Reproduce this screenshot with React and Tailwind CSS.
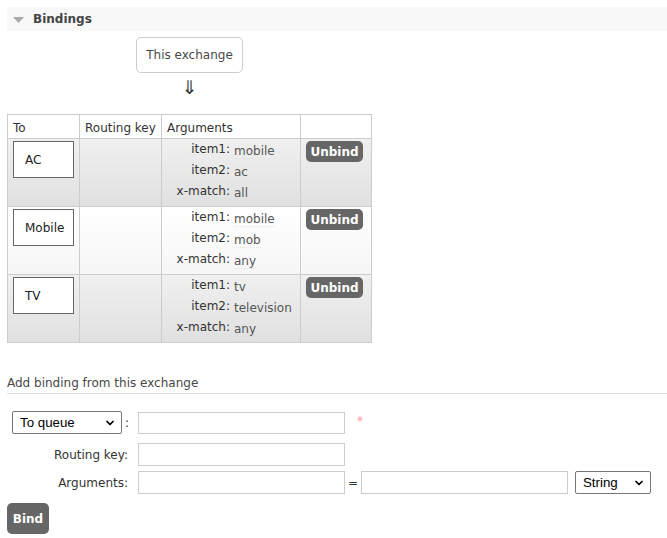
import { ChevronDown } from "lucide-react";

const bindings = [
	{ to: "AC", args: [["item1", "mobile"], ["item2", "ac"], ["x-match", "all"]], alt: false },
	{ to: "Mobile", args: [["item1", "mobile"], ["item2", "mob"], ["x-match", "any"]], alt: true },
	{ to: "TV", args: [["item1", "tv"], ["item2", "television"], ["x-match", "any"]], alt: false },
];

const Select = ({ label, width }) => (
	<div
		className={`relative h-[23px] ${width} border border-[#767676] rounded-[2px] bg-white flex items-center pl-[7px] text-[13.3px] text-black`}
		style={{ fontFamily: '"Liberation Sans", Arial, sans-serif' }}
	>
		{label}
		<ChevronDown size={12} strokeWidth={3.5} className="absolute right-[5px] top-[5px] text-black" />
	</div>
);

const App = () => {
	return (
		<div className="w-[667px] h-[538px] bg-white text-[12px] text-[#484848] overflow-hidden" style={{ fontFamily: '"DejaVu Sans", Verdana, sans-serif' }}>
			{/* section header */}
			<div className="mt-[7px] ml-[7px] h-[24px] bg-[#f8f8f8] flex items-center pl-[6px]">
				<svg width="11" height="6" viewBox="0 0 11 6" className="mt-[1px]">
					<polygon points="0,0 11,0 5.5,6" fill="#aaa" />
				</svg>
				<span className="ml-[9px] font-bold text-[#444]">Bindings</span>
			</div>

			<div className="ml-[136px] mt-[6px] w-[107px] h-[36px] border border-[#ccc] rounded-[5px] flex items-center justify-center">
				This exchange
			</div>
			<div className="ml-[136px] w-[107px] text-center text-[19px] leading-[29px] text-[#333]">⇓</div>

			<table className="ml-[7px] mt-[12px] border-collapse">
				<thead>
					<tr className="h-[24px] bg-white">
						<th className="w-[72px] border border-[#ccc] font-normal text-left pl-[5px] pt-[2px] text-[#333]">To</th>
						<th className="w-[82px] border border-[#ccc] font-normal text-left pl-[5px] pt-[2px] text-[#333]">Routing key</th>
						<th className="w-[139px] border border-[#ccc] font-normal text-left pl-[5px] pt-[2px] text-[#333]">Arguments</th>
						<th className="w-[71px] border border-[#ccc]"></th>
					</tr>
				</thead>
				<tbody>
					{bindings.map((b) => (
						<tr key={b.to} className={`h-[68px] ${b.alt ? "bg-gradient-to-b from-[#ffffff] to-[#f6f6f6]" : "bg-gradient-to-b from-[#f0f0f0] to-[#e0e0e0]"}`}>
							<td className="border border-[#ccc] align-top pt-[2px] pl-[5px]">
								<div className="w-[61px] h-[37px] border border-[#666] bg-white flex items-center pl-[11px] text-[#222]">{b.to}</div>
							</td>
							<td className="border border-[#ccc]"></td>
							<td className="border border-[#ccc] align-top">
								<div className="grid grid-cols-[68px_auto] gap-x-[4px]">
									{b.args.map(([k, v]) => (
										<div key={k} className="contents">
											<div className="h-[21px] leading-[21px] text-right font-normal text-[#333]">{k}:</div>
											<div className="h-[21px] leading-[21px] pt-[2px]">
												<span className="text-[#555] border-b border-dotted border-[#e4e4e4]">{v}</span>
											</div>
										</div>
									))}
								</div>
							</td>
							<td className="border border-[#ccc] align-top pt-[2px] pl-[5px]">
								<button className="w-[57px] h-[21px] bg-[#666] rounded-[5px] text-white font-bold text-[12px]">Unbind</button>
							</td>
						</tr>
					))}
				</tbody>
			</table>

			{/* add binding form */}
			<div className="ml-[7px] mt-[31px] pb-[1px] border-b border-[#ddd] text-[12px]">Add binding from this exchange</div>

			<div className="ml-[7px] mt-[17px] flex items-center">
				<div className="w-[124px] flex items-center pl-[5px]">
					<Select label="To queue" width="w-[110px]" />
					<span className="ml-[3px] text-[#333]">:</span>
				</div>
				<input className="ml-[7px] w-[207px] h-[22px] border border-[#ccc]" />
				<span className="ml-[12px] -mt-[3px] text-[#f99]">*</span>
			</div>

			<div className="ml-[7px] mt-[9px] flex items-center">
				<label className="w-[121px] text-right text-[#333]">Routing key:</label>
				<input className="ml-[10px] w-[207px] h-[23px] border border-[#ccc]" />
			</div>

			<div className="ml-[7px] mt-[5px] flex items-center">
				<label className="w-[121px] text-right text-[#333]">Arguments:</label>
				<input className="ml-[10px] w-[207px] h-[23px] border border-[#ccc]" />
				<span className="w-[16px] text-center text-[#333]">=</span>
				<input className="w-[207px] h-[23px] border border-[#ccc]" />
				<div className="ml-[7px]">
					<Select label="String" width="w-[76px]" />
				</div>
			</div>

			<button className="ml-[7px] mt-[9px] w-[42px] h-[31px] bg-[#666] rounded-[5px] text-white font-bold text-[12px]">Bind</button>
		</div>
	);
};

export default App;
